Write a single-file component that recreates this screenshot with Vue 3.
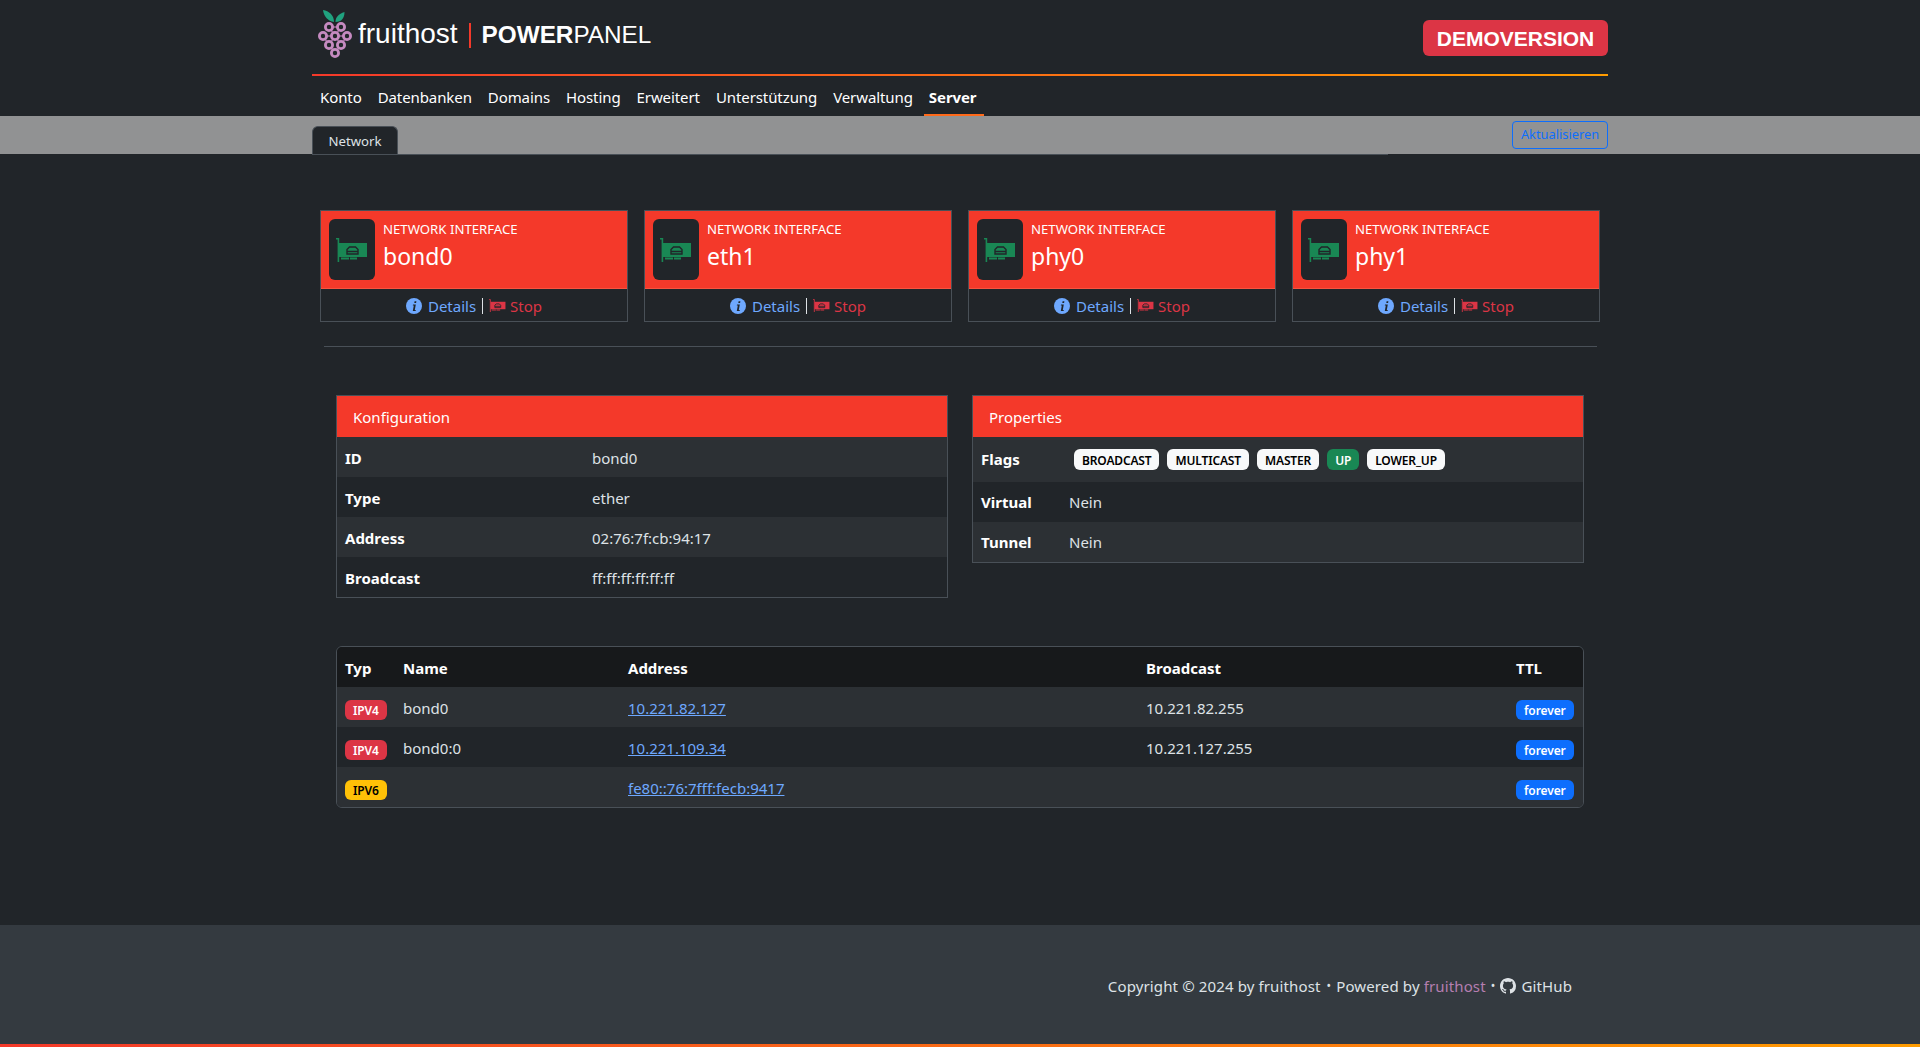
<script setup>
const navItems = ['Konto', 'Datenbanken', 'Domains', 'Hosting', 'Erweitert', 'Unterstützung', 'Verwaltung', 'Server']
const interfaces = ['bond0', 'eth1', 'phy0', 'phy1']
const config = [
  ['ID', 'bond0'],
  ['Type', 'ether'],
  ['Address', '02:76:7f:cb:94:17'],
  ['Broadcast', 'ff:ff:ff:ff:ff:ff']
]
const flags = [
  { name: 'BROADCAST', up: false },
  { name: 'MULTICAST', up: false },
  { name: 'MASTER', up: false },
  { name: 'UP', up: true },
  { name: 'LOWER_UP', up: false }
]
const addresses = [
  { type: 'IPV4', name: 'bond0', address: '10.221.82.127', broadcast: '10.221.82.255' },
  { type: 'IPV4', name: 'bond0:0', address: '10.221.109.34', broadcast: '10.221.127.255' },
  { type: 'IPV6', name: '', address: 'fe80::76:7fff:fecb:9417', broadcast: '' }
]
const grapes = [[13, 18], [25, 18], [7, 27], [19, 27], [31, 27], [13, 36], [25, 36], [19, 44]]
</script>

<template>
  <div class="page">
    <div class="container">
      <header class="top">
        <div class="brand">
          <svg class="logo" viewBox="0 0 38 50" width="38" height="50">
            <path d="M18 13C12 12 8 8 7 1c6 1 11 5 11 12z" fill="#20a27f" />
            <path d="M19.5 13c0-5 3-8 9-10 0 6-3 10-9 10z" fill="#20a27f" />
            <path d="M13 18L25 18M7 27L31 27M13 18L19 27L25 18M7 27L13 36L19 27L25 36L31 27M13 36L19 44L25 36" stroke="#a0699c" stroke-width="1.5" fill="none" />
            <circle v-for="g in grapes" :key="g.join()" :cx="g[0]" :cy="g[1]" r="3.6" fill="#212529" stroke="#c58ac0" stroke-width="2.8" />
          </svg>
          <span class="fruit">fruithost</span>
          <span class="divider"></span>
          <span class="panel"><b>POWER</b>PANEL</span>
        </div>
        <div class="demo">DEMOVERSION</div>
      </header>
      <nav class="nav">
        <a v-for="item in navItems" :key="item" :class="{ active: item === 'Server' }">{{ item }}</a>
      </nav>
    </div>

    <div class="subbar">
      <div class="container subinner">
        <div class="tabs">
          <span class="tab">Network</span>
        </div>
        <button class="refresh">Aktualisieren</button>
      </div>
    </div>

    <main class="container main">
      <section class="cards">
        <div class="card" v-for="nic in interfaces" :key="nic">
          <div class="cardHead">
            <div class="iconBox">
              <svg viewBox="0 0 32 24" width="32" height="24">
                <path d="M0 0h3.2v24H1.6V1.6H0z" fill="#198754" />
                <path d="M3 5h28v14H3z" fill="#198754" />
                <path d="M5 19.5h8v2H5zM14 19.5h7v2h-7z" fill="#198754" />
                <path d="M11 16v-4.5L13.5 9h6l2.5 2.5V16zM11 13.5h11" fill="none" stroke="#212529" stroke-width="1.4" />
              </svg>
            </div>
            <div class="cardText">
              <small>NETWORK INTERFACE</small>
              <strong>{{ nic }}</strong>
            </div>
          </div>
          <div class="cardFoot">
            <svg class="info" viewBox="0 0 16 16" width="16" height="16">
              <circle cx="8" cy="8" r="8" fill="#6ea8fe" />
              <path d="M8.6 3.2h1.8l-.3 1.8H8.3zM7 6.6h2.8L8.8 12h1l-.2 1H6.8l1-5.4h-1z" fill="#212529" />
            </svg>
            <a class="details">Details</a>
            <span class="pipe"></span>
            <svg class="stopIcon" viewBox="0 0 32 24" width="17" height="13">
              <path d="M0 0h3.2v24H1.6V1.6H0z" fill="#dc3545" />
              <path d="M3 5h28v14H3z" fill="#dc3545" />
              <path d="M5 19.5h8v2H5zM14 19.5h7v2h-7z" fill="#dc3545" />
              <path d="M11 16v-4.5L13.5 9h6l2.5 2.5V16zM11 13.5h11" fill="none" stroke="#212529" stroke-width="1.6" />
            </svg>
            <a class="stop">Stop</a>
          </div>
        </div>
      </section>

      <hr class="rule" />

      <section class="panels">
        <div class="box">
          <div class="boxHead">Konfiguration</div>
          <table class="kv">
            <colgroup><col style="width: 247px" /><col /></colgroup>
            <tbody>
              <tr v-for="row in config" :key="row[0]">
                <th>{{ row[0] }}</th>
                <td>{{ row[1] }}</td>
              </tr>
            </tbody>
          </table>
        </div>
        <div class="box">
          <div class="boxHead">Properties</div>
          <table class="kv props">
            <colgroup><col style="width: 88px" /><col /></colgroup>
            <tbody>
              <tr>
                <th class="flagHead">Flags</th>
                <td class="flagCell">
                  <span v-for="f in flags" :key="f.name" class="badge" :class="f.up ? 'green' : 'light'">{{ f.name }}</span>
                </td>
              </tr>
              <tr>
                <th>Virtual</th>
                <td>Nein</td>
              </tr>
              <tr>
                <th>Tunnel</th>
                <td>Nein</td>
              </tr>
            </tbody>
          </table>
        </div>
      </section>

      <section class="addressBox">
        <table class="addresses">
          <colgroup>
            <col style="width: 58px" />
            <col style="width: 225px" />
            <col style="width: 518px" />
            <col style="width: 370px" />
            <col />
          </colgroup>
          <thead>
            <tr>
              <th>Typ</th>
              <th>Name</th>
              <th>Address</th>
              <th>Broadcast</th>
              <th>TTL</th>
            </tr>
          </thead>
          <tbody>
            <tr v-for="a in addresses" :key="a.address">
              <td><span class="badge" :class="a.type === 'IPV4' ? 'red' : 'yellow'">{{ a.type }}</span></td>
              <td>{{ a.name }}</td>
              <td><a class="ip">{{ a.address }}</a></td>
              <td>{{ a.broadcast }}</td>
              <td><span class="badge blue">forever</span></td>
            </tr>
          </tbody>
        </table>
      </section>
    </main>

    <footer class="footer">
      <div class="container footInner">
        <span>Copyright © 2024 by fruithost</span>
        <span class="dot first">•</span>
        <span>Powered by <a class="pink">fruithost</a></span>
        <span class="dot">•</span>
        <svg viewBox="0 0 16 16" width="16" height="16" fill="#dee2e6">
          <path d="M8 0C3.58 0 0 3.58 0 8c0 3.54 2.29 6.53 5.47 7.59.4.07.55-.17.55-.38 0-.19-.01-.82-.01-1.49-2.01.37-2.53-.49-2.69-.94-.09-.23-.48-.94-.82-1.13-.28-.15-.68-.52-.01-.53.63-.01 1.08.58 1.23.82.72 1.21 1.87.87 2.33.66.07-.52.28-.87.51-1.07-1.78-.2-3.64-.89-3.64-3.95 0-.87.31-1.59.82-2.15-.08-.2-.36-1.02.08-2.12 0 0 .67-.21 2.2.82.64-.18 1.32-.27 2-.27.68 0 1.36.09 2 .27 1.53-1.04 2.2-.82 2.2-.82.44 1.1.16 1.92.08 2.12.51.56.82 1.27.82 2.15 0 3.07-1.87 3.75-3.65 3.95.29.25.54.73.54 1.48 0 1.07-.01 1.93-.01 2.2 0 .21.15.46.55.38A8.012 8.012 0 0 0 16 8c0-4.42-3.58-8-8-8z" />
        </svg>
        <span>GitHub</span>
      </div>
    </footer>
  </div>
</template>

<style>
html, body {
  margin: 0;
  background: #212529;
}
</style>

<style scoped>
.page {
  min-height: 100vh;
  display: flex;
  flex-direction: column;
  background: #212529;
  color: #dee2e6;
  font-family: "Noto Sans", sans-serif;
  font-size: 15px;
  line-height: 24px;
}

.container {
  width: 1296px;
  margin: 0 auto;
}

/* header */
.top {
  height: 74px;
  box-sizing: content-box;
  display: flex;
  align-items: flex-start;
  justify-content: space-between;
  border-bottom: 2px solid;
  border-image: linear-gradient(90deg, #f4392a, #ff9c00) 1;
}

.brand {
  display: flex;
  align-items: center;
  height: 56px;
  padding: 6px 0 0 4px;
  color: #fff;
  font-family: "Liberation Sans", Arial, sans-serif;
}

.logo {
  margin-right: 4px;
}

.fruit {
  font-size: 28px;
}

.divider {
  width: 2px;
  height: 25px;
  margin: 3px 11px 0;
  background: #f4392a;
}

.panel {
  font-size: 24.3px;
  margin-top: 2px;
}

.demo {
  margin-top: 20px;
  width: 185px;
  text-align: center;
  height: 36px;
  line-height: 37px;
  border-radius: 6px;
  background: #dc3545;
  color: #fff;
  font-family: "Liberation Sans", Arial, sans-serif;
  font-size: 21px;
  font-weight: 700;
}

.nav {
  display: flex;
  height: 40px;
  letter-spacing: -0.09px;
}

.nav a {
  padding: 9px 8px 0;
  color: #fff;
}

.nav a.active {
  margin-left: 3px;
  padding-left: 5px;
  font-weight: 700;
  border-bottom: 2px solid #ff6a1a;
}

/* tab bar */
.subbar {
  height: 38px;
  background: #919293;
}

.subinner {
  display: flex;
  justify-content: space-between;
  position: relative;
}

.tabs {
  width: 1076px;
  height: 38px;
  box-sizing: content-box;
  border-bottom: 1px solid #495057;
  display: flex;
  align-items: flex-end;
}

.tab {
  height: 28px;
  width: 86px;
  box-sizing: border-box;
  text-align: center;
  border: 1px solid #495057;
  border-bottom: none;
  border-radius: 6px 6px 0 0;
  background: #212529;
  color: #dee2e6;
  font-size: 13.2px;
  line-height: 29px;
}

.refresh {
  height: 28px;
  width: 96px;
  margin-top: 5px;
  padding: 0 0 3px;
  background: transparent;
  border: 1px solid #0d6efd;
  border-radius: 4px;
  color: #0d6efd;
  font-family: inherit;
  font-size: 12.8px;
}

/* main */
.main {
  flex: 1;
  padding-top: 56px;
}

.cards {
  display: grid;
  grid-template-columns: repeat(4, 308px);
  gap: 16px;
  padding: 0 8px;
}

.card {
  border: 1px solid #495057;
}

.cardHead {
  display: flex;
  gap: 8px;
  padding: 8px;
  height: 78px;
  box-sizing: border-box;
  background: #f4392a;
  border-bottom: 1px solid #f8533f;
  color: #fff;
}

.iconBox {
  width: 46px;
  height: 61px;
  border-radius: 6px;
  background: #212529;
  display: flex;
  align-items: center;
  justify-content: center;
}

.cardText {
  display: flex;
  flex-direction: column;
  padding-top: 1px;
}

.cardText small {
  font-size: 13.2px;
  line-height: 19px;
}

.cardText strong {
  font-size: 23px;
  font-weight: 400;
  line-height: 34px;
}

.cardFoot {
  height: 32px;
  padding-top: 1px;
  box-sizing: border-box;
  display: flex;
  align-items: center;
  justify-content: center;
  font-size: 15px;
}

.info {
  margin-right: 6px;
}

.details {
  color: #6ea8fe;
}

.pipe {
  width: 1px;
  height: 16px;
  margin: 0 6px;
  background: #dee2e6;
}

.stopIcon {
  margin-right: 4px;
}

.stop {
  color: #dc3545;
}

.rule {
  margin: 24px 11px 48px 12px;
  border: none;
  border-top: 1px solid #495057;
}

/* key/value boxes */
.panels {
  display: grid;
  grid-template-columns: 612px 612px;
  justify-content: space-between;
  align-items: start;
  padding: 0 24px;
}

.box {
  border: 1px solid #495057;
}

.boxHead {
  height: 41px;
  padding: 9px 16px 0;
  box-sizing: border-box;
  background: #f4392a;
  color: #fff;
}

table {
  width: 100%;
  border-collapse: collapse;
  table-layout: fixed;
}

th, td {
  padding: 9px 8px 7px;
  text-align: left;
  vertical-align: middle;
  font-weight: 400;
}

th {
  font-weight: 700;
  color: #fff;
}

.kv tbody tr:nth-child(odd) {
  background: #2c3034;
}

.props th, .props td {
  padding-top: 8px;
  padding-bottom: 8px;
}

.props .flagHead {
  padding-top: 8px;
  padding-bottom: 10px;
}

.props .flagCell {
  padding: 12px 8px 12px 13px;
  display: flex;
  gap: 8px;
}

.badge {
  display: inline-block;
  height: 21px;
  padding: 0 8px;
  box-sizing: border-box;
  border-radius: 6px;
  font-size: 12px;
  font-weight: 600;
  line-height: 23px;
  letter-spacing: -0.15px;
  vertical-align: middle;
}

.light {
  background: #f8f9fa;
  color: #000;
}

.green {
  background: #198754;
  color: #fff;
}

.red {
  background: #dc3545;
  color: #fff;
}

.yellow {
  background: #ffc107;
  color: #000;
}

.blue {
  background: #0d6efd;
  color: #fff;
}

/* addresses */
.addressBox {
  margin: 48px 24px 0;
  border: 1px solid #495057;
  border-radius: 6px;
  overflow: hidden;
}

.addresses thead tr {
  background: #17191b;
}

.addresses tbody tr:nth-child(odd) {
  background: #2c3034;
}

.addresses th {
  height: 40px;
  box-sizing: border-box;
}

.addresses td {
  padding-top: 1px;
  padding-bottom: 0;
  height: 40px;
  box-sizing: border-box;
}

.addresses .badge {
  height: 20px;
  line-height: 21px;
  margin-top: 1px;
  letter-spacing: -0.1px;
}

.ip {
  color: #6ea8fe;
  text-decoration: underline;
}

/* footer */
.footer {
  height: 122px;
  box-sizing: border-box;
  background: #343a40;
  border-bottom: 3px solid;
  border-image: linear-gradient(90deg, #f4392a, #ff9c00) 1;
}

.footInner {
  display: flex;
  justify-content: flex-end;
  align-items: center;
  gap: 5px;
  padding: 49px 36px 0 0;
  box-sizing: border-box;
  letter-spacing: 0.13px;
}

.dot {
  font-size: 12px;
}

.dot.first {
  margin-left: 1px;
}

.pink {
  color: #b57eb0;
}
</style>
